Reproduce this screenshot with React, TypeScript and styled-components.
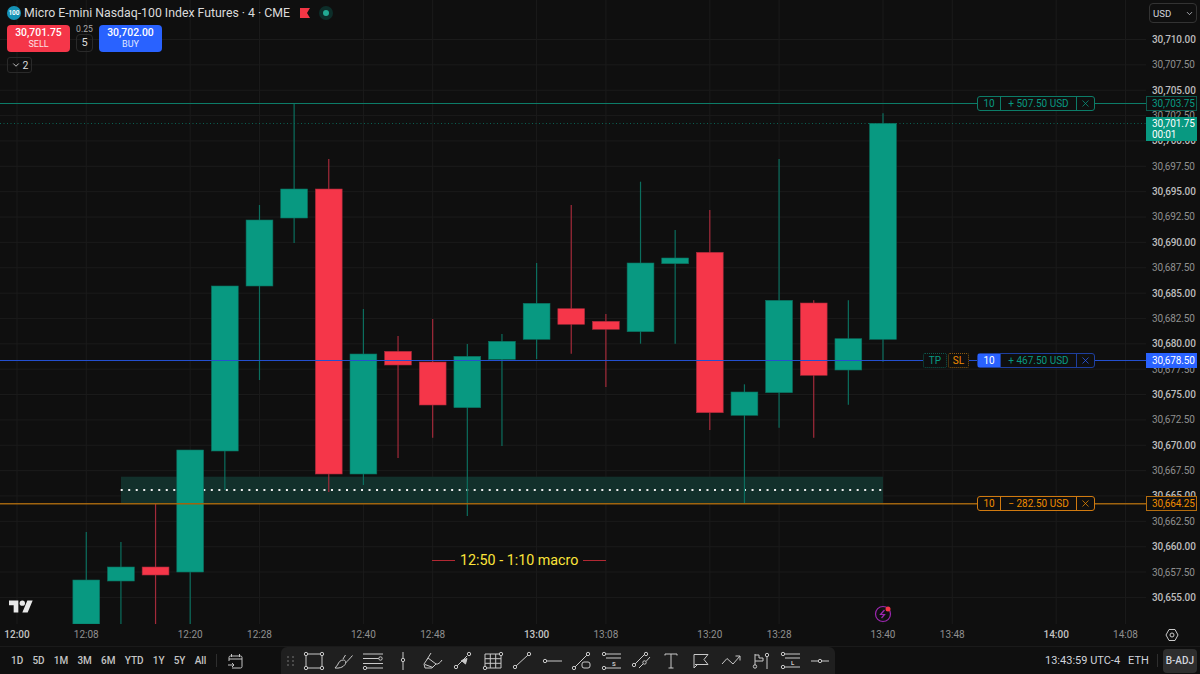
import styled, { createGlobalStyle } from "styled-components";
import { ChevronDown, X } from "lucide-react";
import type { ReactNode } from "react";

const GlobalStyle = createGlobalStyle`
  html, body {
    margin: 0;
    padding: 0;
    background: #0f0f0f;
  }
  * {
    box-sizing: border-box;
  }
`;

const GREEN = "#089981";
const RED = "#f53649";
const BLUE = "#2962ff";
const ORANGE = "#f08c00";

const FONT = `Roboto, "Liberation Sans", sans-serif`;

const BAR_STEP = 34.64;
const barX = (n: number) => 17 + n * BAR_STEP;

type Candle = {
  n: number;
  up: boolean;
  wickTop: number;
  wickBottom: number;
  bodyTop: number;
  bodyBottom: number;
};

const candles: Candle[] = [
  { n: 2, up: true, wickTop: 532, wickBottom: 624, bodyTop: 580, bodyBottom: 624 },
  { n: 3, up: true, wickTop: 542, wickBottom: 624, bodyTop: 567, bodyBottom: 581 },
  { n: 4, up: false, wickTop: 504, wickBottom: 624, bodyTop: 567, bodyBottom: 575 },
  { n: 5, up: true, wickTop: 450, wickBottom: 624, bodyTop: 450, bodyBottom: 572 },
  { n: 6, up: true, wickTop: 286, wickBottom: 490, bodyTop: 286, bodyBottom: 451 },
  { n: 7, up: true, wickTop: 205, wickBottom: 380, bodyTop: 220, bodyBottom: 286 },
  { n: 8, up: true, wickTop: 104, wickBottom: 243, bodyTop: 189, bodyBottom: 218 },
  { n: 9, up: false, wickTop: 159, wickBottom: 492, bodyTop: 189, bodyBottom: 474 },
  { n: 10, up: true, wickTop: 309, wickBottom: 485, bodyTop: 354, bodyBottom: 474 },
  { n: 11, up: false, wickTop: 336, wickBottom: 458, bodyTop: 351.3, bodyBottom: 365 },
  { n: 12, up: false, wickTop: 319, wickBottom: 437.7, bodyTop: 362, bodyBottom: 405 },
  { n: 13, up: true, wickTop: 344, wickBottom: 516, bodyTop: 356.3, bodyBottom: 407.7 },
  { n: 14, up: true, wickTop: 334, wickBottom: 446, bodyTop: 341.3, bodyBottom: 359.3 },
  { n: 15, up: true, wickTop: 263, wickBottom: 359, bodyTop: 303.3, bodyBottom: 339.3 },
  { n: 16, up: false, wickTop: 205, wickBottom: 353.7, bodyTop: 308.7, bodyBottom: 324.3 },
  { n: 17, up: false, wickTop: 314, wickBottom: 387, bodyTop: 321.3, bodyBottom: 329.3 },
  { n: 18, up: true, wickTop: 181.7, wickBottom: 343.7, bodyTop: 263, bodyBottom: 331.7 },
  { n: 19, up: true, wickTop: 230, wickBottom: 343.7, bodyTop: 258, bodyBottom: 263.7 },
  { n: 20, up: false, wickTop: 210, wickBottom: 430, bodyTop: 252.3, bodyBottom: 412.7 },
  { n: 21, up: true, wickTop: 384.3, wickBottom: 503.3, bodyTop: 392, bodyBottom: 415.3 },
  { n: 22, up: true, wickTop: 159, wickBottom: 427.7, bodyTop: 300.3, bodyBottom: 392.7 },
  { n: 23, up: false, wickTop: 300.3, wickBottom: 437.7, bodyTop: 303, bodyBottom: 375.3 },
  { n: 24, up: true, wickTop: 300.3, wickBottom: 404.7, bodyTop: 338.7, bodyBottom: 370 },
  { n: 25, up: true, wickTop: 113.3, wickBottom: 361.7, bodyTop: 123.3, bodyBottom: 339.3 },
];

const TICK_HEIGHT = 25.36;
const ticks = Array.from({ length: 23 }, (_, i) => 30710 - i * 2.5);

const timeLabels = [
  { n: 0, label: "12:00", strong: true },
  { n: 2, label: "12:08" },
  { n: 5, label: "12:20" },
  { n: 7, label: "12:28" },
  { n: 10, label: "12:40" },
  { n: 12, label: "12:48" },
  { n: 15, label: "13:00", strong: true },
  { n: 17, label: "13:08" },
  { n: 20, label: "13:20" },
  { n: 22, label: "13:28" },
  { n: 25, label: "13:40" },
  { n: 27, label: "13:48" },
  { n: 30, label: "14:00", strong: true },
  { n: 32, label: "14:08" },
];

const ranges = ["1D", "5D", "1M", "3M", "6M", "YTD", "1Y", "5Y", "All"];

const Page = styled.div`
  width: 1200px;
  height: 674px;
  overflow: hidden;
  display: flex;
  flex-direction: column;
  background: #0f0f0f;
  font-family: ${FONT};
  color: #d1d4dc;
`;

const ChartRow = styled.div`
  height: 624px;
  flex: none;
  display: flex;
`;

const ChartPane = styled.div`
  position: relative;
  width: 1146px;
  height: 624px;
  overflow: hidden;
`;

const ChartCanvas = styled.svg`
  display: block;
`;

const Legend = styled.div`
  position: absolute;
  left: 7px;
  top: 4px;
  display: flex;
  flex-direction: column;
  gap: 3px;
`;

const LegendTitle = styled.div`
  display: flex;
  align-items: center;
  height: 18px;
  font-size: 12.3px;
  color: #dbdbdb;
  white-space: nowrap;
`;

const SymbolBadge = styled.span`
  width: 14px;
  height: 14px;
  margin-right: 3px;
  border-radius: 50%;
  background: #1592b6;
  color: #fff;
  font-size: 6.5px;
  font-weight: 700;
  display: flex;
  align-items: center;
  justify-content: center;
`;

const FlagIcon = styled.svg`
  margin-left: 10px;
`;

const StatusDot = styled.span`
  width: 14px;
  height: 14px;
  margin-left: 9px;
  border-radius: 50%;
  background: #0d2e2a;
  display: flex;
  align-items: center;
  justify-content: center;
  &::after {
    content: "";
    width: 6px;
    height: 6px;
    border-radius: 50%;
    background: #22ab94;
  }
`;

const TradeRow = styled.div`
  height: 27px;
  display: flex;
  gap: 6px;
  align-items: stretch;
`;

const TradeButton = styled.div<{ $bg: string }>`
  width: 63px;
  height: 27px;
  border-radius: 4px;
  background: ${(p) => p.$bg};
  color: #fff;
  display: flex;
  flex-direction: column;
  align-items: center;
  justify-content: center;
  font-size: 10.4px;
  font-weight: 500;
  line-height: 12.5px;
`;

const TradeCaption = styled.span`
  font-size: 9px;
  font-weight: 400;
  line-height: 11px;
  opacity: 0.85;
`;

const StepColumn = styled.div`
  width: 17px;
  display: flex;
  flex-direction: column;
  align-items: center;
  justify-content: flex-end;
  font-size: 8.6px;
  line-height: 8px;
  color: #a8a8a8;
`;

const StepBox = styled.div`
  width: 17px;
  height: 18px;
  margin-top: 1px;
  border: 1px solid #2a2a2a;
  border-radius: 4px;
  color: #dbdbdb;
  font-size: 11px;
  display: flex;
  align-items: center;
  justify-content: center;
`;

const CollapseBox = styled.div`
  width: 25px;
  height: 16px;
  margin-top: 2px;
  border: 1px solid #2a2a2a;
  border-radius: 3px;
  color: #dbdbdb;
  font-size: 10.5px;
  display: flex;
  align-items: center;
  justify-content: center;
  gap: 2px;
`;

const OrderPill = styled.div<{ $top: number; $color: string; $border: string }>`
  position: absolute;
  left: 977px;
  top: ${(p) => p.$top}px;
  width: 118px;
  height: 15px;
  display: flex;
  background: #0f0f0f;
  border: 1px solid ${(p) => p.$border};
  border-radius: 3px;
  font-size: 10px;
  color: ${(p) => p.$color};
`;

const PillQty = styled.div<{ $fill?: string; $border: string }>`
  width: 23px;
  display: flex;
  align-items: center;
  justify-content: center;
  border-right: 1px solid ${(p) => p.$border};
  background: ${(p) => p.$fill ?? "transparent"};
  color: ${(p) => (p.$fill ? "#fff" : "inherit")};
`;

const PillProfit = styled.div<{ $color?: string }>`
  flex: 1;
  display: flex;
  align-items: center;
  justify-content: center;
  color: ${(p) => p.$color ?? "inherit"};
`;

const PillClose = styled.div<{ $border: string }>`
  width: 18px;
  display: flex;
  align-items: center;
  justify-content: center;
  border-left: 1px solid ${(p) => p.$border};
`;

const BracketGroup = styled.div`
  position: absolute;
  left: 923px;
  top: 353px;
  height: 15px;
  display: flex;
  gap: 1px;
  background: #0f0f0f;
`;

const BracketTag = styled.div<{ $color: string; $border: string; $width: number }>`
  width: ${(p) => p.$width}px;
  height: 15px;
  display: flex;
  align-items: center;
  justify-content: center;
  border: 1px dotted ${(p) => p.$border};
  border-radius: 2px;
  font-size: 10px;
  color: ${(p) => p.$color};
`;

const MacroLabel = styled.div`
  position: absolute;
  left: 432px;
  top: 551px;
  height: 18px;
  display: flex;
  align-items: center;
  gap: 5px;
  font-size: 14.3px;
  color: #fbe43a;
  white-space: nowrap;
  &::before,
  &::after {
    content: "";
    width: 23px;
    height: 1px;
    background: #b22833;
  }
`;

const TvLogo = styled.svg`
  position: absolute;
  left: 9px;
  top: 599px;
`;

const BoltMark = styled.svg`
  position: absolute;
  left: 873px;
  top: 604px;
`;

const PriceAxis = styled.div`
  position: relative;
  width: 54px;
  height: 624px;
  overflow: hidden;
  display: flex;
  flex-direction: column;
`;

const CurrencyBox = styled.div`
  width: 48px;
  height: 20px;
  margin: 3px 0 3.8px 3px;
  padding: 0 2px 0 3px;
  flex: none;
  border: 1px solid #333;
  border-radius: 4px;
  font-size: 9.6px;
  color: #d1d4dc;
  display: flex;
  align-items: center;
  justify-content: space-between;
`;

const PriceTick = styled.div<{ $major: boolean }>`
  height: ${TICK_HEIGHT}px;
  flex: none;
  padding-left: 6px;
  display: flex;
  align-items: center;
  font-size: 10px;
  letter-spacing: -0.12px;
  white-space: nowrap;
  font-weight: ${(p) => (p.$major ? 500 : 400)};
  color: ${(p) => (p.$major ? "#bdbdbd" : "#8f8f8f")};
`;

const PriceTag = styled.div<{ $top: number; $height?: number; $bg: string; $border: string; $color: string }>`
  position: absolute;
  left: 0;
  top: ${(p) => p.$top}px;
  width: 51px;
  height: ${(p) => p.$height ?? 15}px;
  padding-left: 5px;
  background: ${(p) => p.$bg};
  border: 1px solid ${(p) => p.$border};
  color: ${(p) => p.$color};
  font-size: 10px;
  letter-spacing: -0.12px;
  line-height: 11px;
  display: flex;
  flex-direction: column;
  justify-content: center;
  white-space: nowrap;
`;

const TimeRow = styled.div`
  height: 23px;
  flex: none;
  display: flex;
  border-bottom: 1px solid #1a1a1a;
`;

const TimeScale = styled.div`
  position: relative;
  width: 1146px;
`;

const TimeTick = styled.span<{ $strong?: boolean }>`
  position: absolute;
  top: 5px;
  transform: translateX(-50%);
  font-size: 10px;
  font-weight: ${(p) => (p.$strong ? 500 : 400)};
  color: ${(p) => (p.$strong ? "#c4c4c4" : "#8f8f8f")};
`;

const SettingsCell = styled.div`
  flex: 1;
  display: flex;
  align-items: center;
  justify-content: center;
  padding-right: 2px;
`;

const BottomBar = styled.div`
  height: 27px;
  flex: none;
  display: flex;
  align-items: center;
`;

const RangeGroup = styled.div`
  width: 281px;
  flex: none;
  padding-left: 11px;
  display: flex;
  align-items: center;
`;

const RangeItem = styled.span`
  margin-right: 9.2px;
  font-size: 10px;
  font-weight: 500;
  color: #c4c4c4;
`;

const BarDivider = styled.span`
  width: 1px;
  height: 13px;
  margin: 0 10px 0 0;
  background: #2e2e2e;
`;

const ToolPanel = styled.div`
  width: 554px;
  height: 100%;
  flex: none;
  padding-left: 4px;
  display: flex;
  align-items: center;
  background: #1f1f1f;
  border-radius: 6px 6px 0 0;
`;

const GripDots = styled.span`
  width: 14px;
  display: grid;
  grid-template-columns: repeat(2, 2px);
  gap: 2px 3px;
  padding-left: 2px;
  flex: none;
  & > i {
    width: 2px;
    height: 2px;
    background: #4a4a4a;
  }
`;

const ToolButton = styled.span`
  width: 29.8px;
  height: 100%;
  flex: none;
  display: flex;
  align-items: center;
  justify-content: center;
`;

const StatusGroup = styled.div`
  flex: 1;
  display: flex;
  align-items: center;
  padding-left: 210px;
  color: #d1d4dc;
  white-space: nowrap;
`;

const StatusText = styled.span`
  margin-right: 8px;
  font-size: 11px;
`;

const AdjustButton = styled.span`
  margin-left: -5px;
  width: 34px;
  height: 24px;
  flex: none;
  background: #2e2e2e;
  border-radius: 4px;
  font-size: 10px;
  font-weight: 500;
  display: flex;
  align-items: center;
  justify-content: center;
`;

function ToolIcon({ children }: { children: ReactNode }) {
  return (
    <svg width="22" height="20" viewBox="0 0 22 20" fill="none" stroke="#c9c9c9" strokeWidth="1">
      {children}
    </svg>
  );
}

const Dot = ({ x, y }: { x: number; y: number }) => <circle cx={x} cy={y} r="1.7" fill="#1f1f1f" />;

const tools: ReactNode[] = [
  <ToolIcon key="rect">
    <path d="M3 3h16v14H3z" />
    <Dot x={3} y={3} /><Dot x={19} y={3} /><Dot x={3} y={17} /><Dot x={19} y={17} />
  </ToolIcon>,
  <ToolIcon key="brush">
    <path d="M2 17c4 .5 8-.5 10-3.5 1.5-2 .5-4.5-1.5-4.5C7 9 6 11 4.5 14z" />
    <path d="M10 8l2.5-4M12.5 12c2-2 4-4 7-7.5" />
  </ToolIcon>,
  <ToolIcon key="fib">
    <path d="M1 3h20M1 7.5h16M1 12.5h20M5 17h16" />
    <Dot x={18.5} y={7.5} /><Dot x={3} y={17} />
  </ToolIcon>,
  <ToolIcon key="vline">
    <path d="M11 1v6.5M11 10.5V19" />
    <Dot x={11} y={9} />
  </ToolIcon>,
  <ToolIcon key="marker">
    <path d="M2 13l4-6 8 6-4 4H3zM5 8.500L9 2M3 13.500l8 3M14 13c2 .5 4-1 6-4" />
  </ToolIcon>,
  <ToolIcon key="arrow">
    <path d="M5 15L15 5" />
    <path d="M9.5 9.5l5.5-2-1.5 5.5z" fill="#c9c9c9" />
    <Dot x={4} y={16} /><Dot x={17} y={3} />
  </ToolIcon>,
  <ToolIcon key="grid">
    <path d="M3 3h16v14H3zM3 7.7h16M3 12.3h16M8.3 3v14M13.7 3v14" />
    <Dot x={19} y={3} /><Dot x={3} y={17} />
  </ToolIcon>,
  <ToolIcon key="line">
    <path d="M5 15L17 4" />
    <Dot x={4} y={16} /><Dot x={18} y={3} />
  </ToolIcon>,
  <ToolIcon key="hray">
    <path d="M6 10h15" />
    <Dot x={4} y={10} />
  </ToolIcon>,
  <ToolIcon key="linebox">
    <path d="M4 16L16 4" />
    <rect x="11" y="11" width="8" height="6" rx="2" />
    <Dot x={3} y={17} /><Dot x={17} y={3} />
  </ToolIcon>,
  <ToolIcon key="fibs">
    <path d="M5 3h15M5 7h15M5 17h15" />
    <Dot x={3} y={3} /><Dot x={3} y={17} />
    <text x="11" y="14.5" fontSize="6" fill="#c9c9c9" stroke="none" fontFamily="Roboto" fontWeight="700">S</text>
  </ToolIcon>,
  <ToolIcon key="parallel">
    <path d="M4 13L14 3M8 17l4.5-4.5M15 10.5l4-4.5" />
    <Dot x={3} y={14} /><Dot x={15} y={3} /><Dot x={13.5} y={11.5} />
  </ToolIcon>,
  <ToolIcon key="text">
    <path d="M5 4.5V3h12v1.5M11 3v14M8.5 17h5" />
  </ToolIcon>,
  <ToolIcon key="flag">
    <path d="M4 17V3.5h14l-4 5 4 5H5" />
    <path d="M4 17l3-3" />
  </ToolIcon>,
  <ToolIcon key="zigzag">
    <path d="M2 13l5-5.5 6 5.5 7-8" />
    <path d="M15.5 5H20v4.5" />
  </ToolIcon>,
  <ToolIcon key="pins">
    <path d="M5 3v11M5 4h4v3h4v3H5" />
    <Dot x={5} y={15.5} />
    <path d="M17 6v12" />
    <Dot x={17} y={4} />
  </ToolIcon>,
  <ToolIcon key="fibl">
    <path d="M5 3h15M5 7h15M5 16h15" />
    <Dot x={3} y={3} /><Dot x={3} y={16} />
    <text x="11" y="13.5" fontSize="6" fill="#c9c9c9" stroke="none" fontFamily="Roboto" fontWeight="700">L</text>
  </ToolIcon>,
  <ToolIcon key="hline">
    <path d="M2 10h7.5M12.5 10H20" />
    <Dot x={11} y={10} />
  </ToolIcon>,
];

const formatPrice = (p: number) =>
  p.toLocaleString("en-US", { minimumFractionDigits: 2, maximumFractionDigits: 2 });

function Order({
  top,
  border,
  color,
  qtyFill,
  profit,
  profitColor,
}: {
  top: number;
  border: string;
  color: string;
  qtyFill?: string;
  profit: string;
  profitColor?: string;
}) {
  return (
    <OrderPill $top={top} $border={border} $color={color}>
      <PillQty $border={border} $fill={qtyFill}>10</PillQty>
      <PillProfit $color={profitColor}>{profit}</PillProfit>
      <PillClose $border={border}>
        <X size={11} strokeWidth={1.6} />
      </PillClose>
    </OrderPill>
  );
}

export default function App() {
  return (
    <Page>
      <GlobalStyle />
      <ChartRow>
        <ChartPane>
          <ChartCanvas width="1146" height="624" viewBox="0 0 1146 624">
            {ticks.map((t, i) => (
              <line key={t} x1="0" x2="1146" y1={39.5 + i * TICK_HEIGHT} y2={39.5 + i * TICK_HEIGHT} stroke="#1b1b1b" />
            ))}
            {timeLabels.map((t) => (
              <line key={t.n} x1={barX(t.n)} x2={barX(t.n)} y1="0" y2="624" stroke="#1b1b1b" />
            ))}
            <rect x="121" y="476.7" width="762" height="26.8" fill="#12302b" />
            <line x1="120.7" x2="883" y1="490" y2="490" stroke="#eeeeee" strokeWidth="2" strokeDasharray="2 5.51" />
            <line x1="0" x2="1146" y1="103.5" y2="103.5" stroke="#0c7c68" />
            <line x1="0" x2="1146" y1="123.5" y2="123.5" stroke={GREEN} strokeDasharray="1 2.5" opacity="0.6" />
            {candles.map((c) => {
              const color = c.up ? GREEN : RED;
              const edge = c.up ? "#0b6e5e" : "#a32a3a";
              const x = barX(c.n);
              return (
                <g key={c.n}>
                  <line x1={x} x2={x} y1={c.wickTop} y2={c.wickBottom} stroke={edge} strokeWidth="1.2" />
                  <rect
                    x={x - 13.4}
                    y={c.bodyTop}
                    width="26.8"
                    height={c.bodyBottom - c.bodyTop}
                    fill={color}
                    stroke={edge}
                    strokeWidth="0.6"
                  />
                </g>
              );
            })}
            <line x1="0" x2="1146" y1="360.5" y2="360.5" stroke="#2450d0" />
            <line x1="0" x2="1146" y1="503.7" y2="503.7" stroke="#a0640f" strokeWidth="1.4" />
          </ChartCanvas>

          <Legend>
            <LegendTitle>
              <SymbolBadge>100</SymbolBadge>
              Micro E-mini Nasdaq-100 Index Futures · 4 · CME
              <FlagIcon width="10" height="10" viewBox="0 0 10 10">
                <path d="M0 0h10L7 5l3 5H0z" fill="#f23645" />
              </FlagIcon>
              <StatusDot />
            </LegendTitle>
            <TradeRow>
              <TradeButton $bg={RED}>
                30,701.75
                <TradeCaption>SELL</TradeCaption>
              </TradeButton>
              <StepColumn>
                0.25
                <StepBox>5</StepBox>
              </StepColumn>
              <TradeButton $bg={BLUE}>
                30,702.00
                <TradeCaption>BUY</TradeCaption>
              </TradeButton>
            </TradeRow>
            <CollapseBox>
              <ChevronDown size={10} />2
            </CollapseBox>
          </Legend>

          <Order top={96} border="#0c7c68" color={GREEN} profit="+ 507.50 USD" />
          <BracketGroup>
            <BracketTag $width={24} $color={GREEN} $border="#0c5a4e">TP</BracketTag>
            <BracketTag $width={21} $color={ORANGE} $border="#8a5a10">SL</BracketTag>
          </BracketGroup>
          <Order top={353} border="#1e3f9e" color={BLUE} qtyFill={BLUE} profit="+ 467.50 USD" profitColor={GREEN} />
          <Order top={496} border="#d07a10" color={ORANGE} profit="− 282.50 USD" />

          <MacroLabel>12:50 - 1:10 macro</MacroLabel>

          <TvLogo width="24" height="15" viewBox="0 0 36 22">
            <path d="M14 20H7V9H0V2h14v18zM28 20h-8L27.5 2h8L28 20z" fill="#e8e8e8" />
            <circle cx="20" cy="6" r="4" fill="#e8e8e8" />
          </TvLogo>
          <BoltMark width="20" height="20" viewBox="0 0 20 20">
            <circle cx="10" cy="10" r="7.5" fill="none" stroke="#9c27b0" strokeWidth="1.2" />
            <path d="M11.5 6L7.5 10.5h4L8.5 14" fill="none" stroke="#9c27b0" strokeWidth="1.2" />
            <circle cx="15" cy="5" r="2.5" fill="#f53649" />
          </BoltMark>
        </ChartPane>

        <PriceAxis>
          <CurrencyBox>
            USD
            <ChevronDown size={9} />
          </CurrencyBox>
          {ticks.map((t) => (
            <PriceTick key={t} $major={t % 5 === 0}>
              {formatPrice(t)}
            </PriceTick>
          ))}
          <PriceTag $top={96} $bg="#0f0f0f" $border="#0c5a4e" $color={GREEN}>30,703.75</PriceTag>
          <PriceTag $top={117} $height={24} $bg={GREEN} $border={GREEN} $color="#fff">
            <span>30,701.75</span>
            <span>00:01</span>
          </PriceTag>
          <PriceTag $top={353} $bg={BLUE} $border={BLUE} $color="#fff">30,678.50</PriceTag>
          <PriceTag $top={496} $bg="#0f0f0f" $border="#b36c0e" $color={ORANGE}>30,664.25</PriceTag>
        </PriceAxis>
      </ChartRow>

      <TimeRow>
        <TimeScale>
          {timeLabels.map((t) => (
            <TimeTick key={t.n} $strong={t.strong} style={{ left: barX(t.n) }}>
              {t.label}
            </TimeTick>
          ))}
        </TimeScale>
        <SettingsCell>
          <svg width="14" height="14" viewBox="0 0 14 14" fill="none" stroke="#c9c9c9" strokeWidth="1">
            <path d="M4 1.5h6L13 7l-3 5.5H4L1 7z" />
            <circle cx="7" cy="7" r="2" />
          </svg>
        </SettingsCell>
      </TimeRow>

      <BottomBar>
        <RangeGroup>
          {ranges.map((r) => (
            <RangeItem key={r}>{r}</RangeItem>
          ))}
          <BarDivider />
          <svg width="16" height="16" viewBox="0 0 16 16" fill="none" stroke="#c4c4c4" strokeWidth="1">
            <path d="M2 8V4.5A1.5 1.5 0 0 1 3.5 3h10A1.5 1.5 0 0 1 15 4.5v9a1.5 1.5 0 0 1-1.5 1.5H5M4.5 1v3M12.5 1v3M2 6h13M1 12h6M5 10l2 2-2 2" />
          </svg>
        </RangeGroup>
        <ToolPanel>
          <GripDots>
            {Array.from({ length: 6 }, (_, i) => (
              <i key={i} />
            ))}
          </GripDots>
          {tools.map((icon, i) => (
            <ToolButton key={i}>{icon}</ToolButton>
          ))}
        </ToolPanel>
        <StatusGroup>
          <StatusText>13:43:59 UTC-4</StatusText>
          <StatusText>ETH</StatusText>
          <BarDivider />
          <AdjustButton>B-ADJ</AdjustButton>
        </StatusGroup>
      </BottomBar>
    </Page>
  );
}
